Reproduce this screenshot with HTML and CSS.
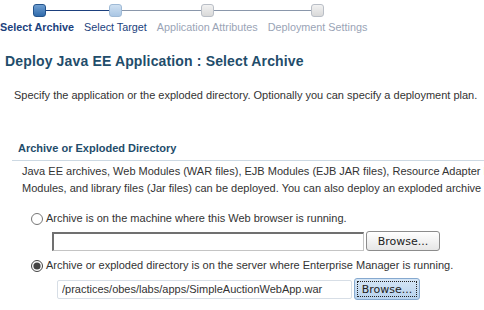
FILE: index.html
```html
<!DOCTYPE html>
<html lang="en">
<head>
    <meta charset="UTF-8">
    <meta name="viewport" content="width=device-width, initial-scale=1.0">
    <title>Deploy Java EE Application</title>
    <link rel="stylesheet" href="styles.css">
</head>
<body>
    <div class="train">
        <div class="step done current">
            <div class="track"><span class="marker"></span></div>
            <span class="step-label">Select Archive</span>
        </div>
        <div class="step next">
            <div class="track"><span class="marker"></span></div>
            <span class="step-label">Select Target</span>
        </div>
        <div class="step todo">
            <div class="track"><span class="marker"></span></div>
            <span class="step-label">Application Attributes</span>
        </div>
        <div class="step todo last">
            <div class="track"><span class="marker"></span></div>
            <span class="step-label">Deployment Settings</span>
        </div>
    </div>

    <h1 class="page-title">Deploy Java EE Application : Select Archive</h1>
    <p class="intro">Specify the application or the exploded directory. Optionally you can specify a deployment plan.</p>

    <div class="section">
        <h2 class="section-title">Archive or Exploded Directory</h2>
        <p class="section-text">Java EE archives, Web Modules (WAR files), EJB Modules (EJB JAR files), Resource Adapter Modules (RAR files), Enterprise Application<br>Modules, and library files (Jar files) can be deployed. You can also deploy an exploded archive to</p>

        <label class="choice">
            <input type="radio" name="location">
            <span>Archive is on the machine where this Web browser is running.</span>
        </label>
        <div class="file-row local">
            <input type="text" class="file-box">
            <button type="button" class="browse">Browse...</button>
        </div>

        <label class="choice second">
            <input type="radio" name="location" checked>
            <span>Archive or exploded directory is on the server where Enterprise Manager is running.</span>
        </label>
        <div class="file-row server">
            <input type="text" class="path-box" value="/practices/obes/labs/apps/SimpleAuctionWebApp.war">
            <button type="button" class="browse focused"><span>Browse...</span></button>
        </div>
    </div>
</body>
</html>
```
FILE: styles.css
```css
body {
    margin: 0;
    font-family: "Liberation Sans", Arial, sans-serif;
    font-size: 11px;
    color: #333;
    background-color: #fff;
    overflow: hidden;
}

/* train of steps */
.train {
    display: flex;
    padding-top: 4px;
}
.step {
    display: flex;
    flex-direction: column;
    align-items: center;
    padding: 0 5px;
}
.step.current {
    padding-left: 0;
}
.track {
    display: flex;
    align-items: center;
    align-self: stretch;
    margin: 0 -5px;
}
.step.current .track {
    margin-left: 0;
}
.track::before,
.track::after {
    content: "";
    flex: 1;
    height: 1px;
    background-color: #8a97ab;
}
.step.current .track::before,
.step.last .track::after {
    background-color: transparent;
}
.step.current .track::after,
.step.next .track::before {
    background-color: #1b3f7d;
}
.marker {
    width: 11px;
    height: 11px;
    border: 1px solid #b9bec6;
    border-radius: 3px;
    background: linear-gradient(#f2f2f2, #d9d9d9);
}
.step.current .marker {
    border-color: #24548c;
    background: linear-gradient(#6f9fd2, #2f6aab);
}
.step.next .marker {
    border-color: #9fbad6;
    background: linear-gradient(#cfe0f1, #a9c6e4);
}
.step-label {
    margin-top: 4px;
    font-size: 10.8px;
    line-height: 13px;
    color: #9aa4b6;
    white-space: nowrap;
}
.step.current .step-label {
    font-weight: bold;
    color: #1b3f7d;
}
.step.next .step-label {
    color: #1b3f7d;
}

/* header */
.page-title {
    margin: 18px 0 0 5px;
    font-size: 14px;
    line-height: 18px;
    letter-spacing: 0.15px;
    font-weight: bold;
    color: #1f4d6b;
}
.intro {
    margin: 19px 0 0 14px;
    line-height: 13px;
    color: #333;
    white-space: nowrap;
}

/* section */
.section {
    margin: 40px 0 0 12px;
}
.section-title {
    margin: 0;
    padding: 0 0 5px 6px;
    font-size: 11px;
    line-height: 13px;
    font-weight: bold;
    color: #1f4d6b;
    border-bottom: 1px solid #cdd9e3;
}
.section-text {
    margin: 2px 0 0 10px;
    line-height: 17px;
    color: #333;
    white-space: nowrap;
}
.choice {
    display: flex;
    align-items: center;
    gap: 3px;
    margin: 15px 0 0 19px;
    line-height: 13px;
    color: #333;
}
.choice.second {
    margin-top: 8px;
}
.choice input {
    margin: 0;
    width: 12px;
    height: 12px;
    accent-color: #444;
}
.file-row {
    display: flex;
    align-items: center;
    gap: 2px;
}
.file-row.local {
    margin: 6px 0 0 40px;
}
.file-row.server {
    margin: 6px 0 0 45px;
}
.file-box {
    width: 312px;
    height: 19px;
    box-sizing: border-box;
    border: 1px solid #c4c4c4;
    border-top: 2px solid #707070;
    border-left: 2px solid #707070;
    padding: 0;
}
.path-box {
    width: 295px;
    height: 19px;
    box-sizing: border-box;
    border: 1px solid #d7dee6;
    border-radius: 2px;
    padding: 0 4px;
    font-family: "Liberation Sans", Arial, sans-serif;
    font-size: 11px;
    color: #333;
}
.browse {
    height: 20px;
    padding: 0 8px;
    border: 1px solid #8c8c8c;
    border-radius: 3px;
    background: linear-gradient(#ffffff, #e6e6e6);
    font-family: "DejaVu Sans", sans-serif;
    font-size: 11px;
    color: #222;
}
.local .browse {
    width: 74px;
}
.browse.focused {
    width: 66px;
    height: 22px;
    padding: 2px;
    border-color: #86a9cf;
    background: linear-gradient(#d6e6f6, #b7d2ee);
}
.browse.focused span {
    display: block;
    height: 16px;
    line-height: 15px;
    box-sizing: border-box;
    border: 1px dotted #222;
}
```
